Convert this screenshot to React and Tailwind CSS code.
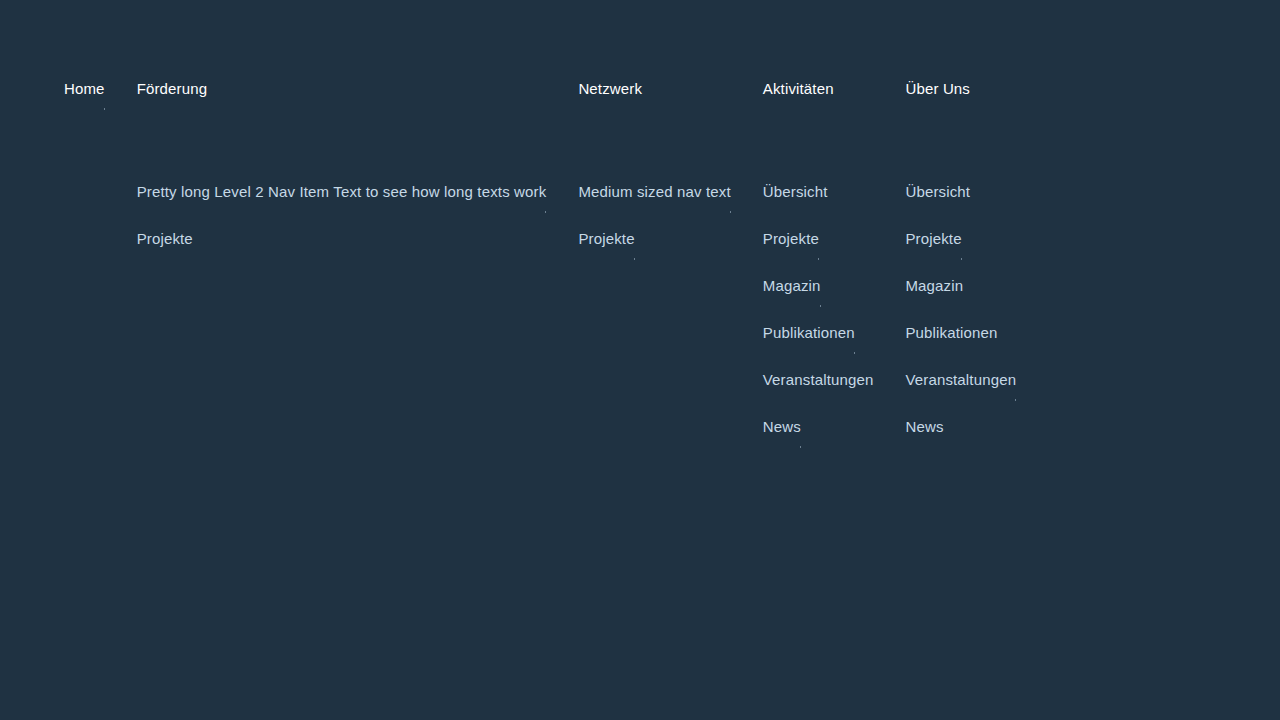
const nav = [
  { label: "Home", mark: true, items: [] },
  {
    label: "Förderung",
    items: [
      { label: "Pretty long Level 2 Nav Item Text to see how long texts work", mark: true },
      { label: "Projekte" },
    ],
  },
  {
    label: "Netzwerk",
    items: [
      { label: "Medium sized nav text", mark: true },
      { label: "Projekte", mark: true },
    ],
  },
  {
    label: "Aktivitäten",
    items: [
      { label: "Übersicht" },
      { label: "Projekte", mark: true },
      { label: "Magazin", mark: true },
      { label: "Publikationen", mark: true },
      { label: "Veranstaltungen" },
      { label: "News", mark: true },
    ],
  },
  {
    label: "Über Uns",
    items: [
      { label: "Übersicht" },
      { label: "Projekte", mark: true },
      { label: "Magazin" },
      { label: "Publikationen" },
      { label: "Veranstaltungen", mark: true },
      { label: "News" },
    ],
  },
];

const NavLink = ({ label, mark, className }) => (
  <a href="#" className={`relative block w-fit leading-5 ${className}`}>
    {label}
    {mark && (
      <span className="absolute right-0 -bottom-[11px] h-[2px] w-px bg-[#6b7f90]" />
    )}
  </a>
);

export default function App() {
  return (
    <div
      className="min-h-screen bg-[#1f3242] text-[15px] leading-5 tracking-[0.15px]"
      style={{ fontFamily: '"Liberation Sans", Arial, sans-serif' }}
    >
      <nav>
        <ul className="flex gap-8 px-16 pt-[79px]">
          {nav.map((n) => (
            <li key={n.label} className="flex flex-col">
              <NavLink label={n.label} mark={n.mark} className="text-white" />
              {n.items.length > 0 && (
                <ul className="mt-[83px] flex flex-col gap-[27px]">
                  {n.items.map((s, i) => (
                    <li key={i}>
                      <NavLink
                        label={s.label}
                        mark={s.mark}
                        className="whitespace-nowrap text-[#c6d9e6]"
                      />
                    </li>
                  ))}
                </ul>
              )}
            </li>
          ))}
        </ul>
      </nav>
    </div>
  );
}
